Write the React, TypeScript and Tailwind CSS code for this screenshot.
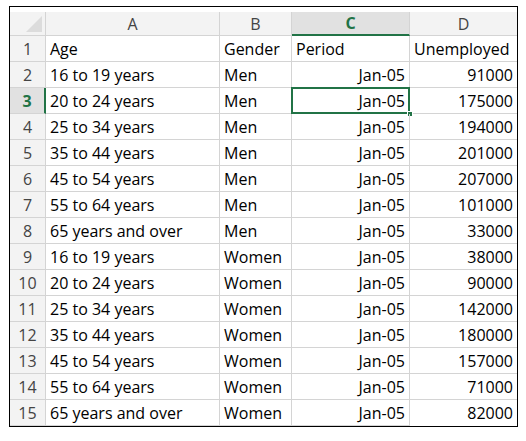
import React from "react";

const rows: [string, string, string, string][] = [
  ["16 to 19 years", "Men", "Jan-05", "91000"],
  ["20 to 24 years", "Men", "Jan-05", "175000"],
  ["25 to 34 years", "Men", "Jan-05", "194000"],
  ["35 to 44 years", "Men", "Jan-05", "201000"],
  ["45 to 54 years", "Men", "Jan-05", "207000"],
  ["55 to 64 years", "Men", "Jan-05", "101000"],
  ["65 years and over", "Men", "Jan-05", "33000"],
  ["16 to 19 years", "Women", "Jan-05", "38000"],
  ["20 to 24 years", "Women", "Jan-05", "90000"],
  ["25 to 34 years", "Women", "Jan-05", "142000"],
  ["35 to 44 years", "Women", "Jan-05", "180000"],
  ["45 to 54 years", "Women", "Jan-05", "157000"],
  ["55 to 64 years", "Women", "Jan-05", "71000"],
  ["65 years and over", "Women", "Jan-05", "82000"],
];

const cell = "h-[26px] border-r border-b border-[#d4d4d4] flex items-center px-[4px] whitespace-nowrap overflow-visible";

export default function App() {
  return (
    <div className="w-[526px] h-[441px] bg-white pt-[6px] pl-[9px]" style={{ fontFamily: "'Open Sans', 'Liberation Sans', sans-serif" }}>
      <div className="w-[509px] h-[421px] border border-black bg-white pt-[5px] text-[16px] text-black">
        <div className="grid grid-cols-[36px_174px_72px_118px_107px]">
          <div className="h-[24px] bg-[#f3f3f3] border-r border-b border-[#d4d4d4] relative">
            <div className="absolute right-[3px] bottom-[3px] w-0 h-0 border-l-[16px] border-l-transparent border-b-[16px] border-b-[#dcdcdc]" />
          </div>
          <div className="h-[24px] bg-[#f3f3f3] border-r border-b border-[#d4d4d4] flex items-center justify-center text-[#444]">A</div>
          <div className="h-[24px] bg-[#f3f3f3] border-r border-b border-[#d4d4d4] flex items-center justify-center text-[#444]">B</div>
          <div className="h-[24px] bg-[#e1e1e1] border-r border-[#d4d4d4] border-b-2 border-b-[#217346] flex items-center justify-center text-[#217346] font-bold">C</div>
          <div className="h-[24px] bg-[#f3f3f3] border-b border-[#d4d4d4] flex items-center justify-center text-[#444]">D</div>
          <div className={`${cell} justify-center bg-[#f3f3f3] text-[#444]`}>1</div>
          <div className={cell}>Age</div>
          <div className={cell}>Gender</div>
          <div className={cell}>Period</div>
          <div className={`${cell} border-r-0`}>Unemployed</div>
          {rows.map((r, i) => {
            const n = i + 2;
            const sel = n === 3;
            return (
              <React.Fragment key={n}>
                <div className={`${cell} justify-center ${sel ? "bg-[#e1e1e1] text-[#217346] font-bold border-r-2 border-r-[#217346]" : "bg-[#f3f3f3] text-[#444]"}`}>{n}</div>
                <div className={cell}>{r[0]}</div>
                <div className={cell}>{r[1]}</div>
                <div className={`${cell} justify-end relative`}>
                  {r[2]}
                  {sel && (
                    <>
                      <div className="absolute -left-px -top-px -right-px -bottom-px border-2 border-[#217346]" />
                      <div className="absolute -right-[4px] -bottom-[4px] w-[6px] h-[6px] bg-[#217346] border border-white" />
                    </>
                  )}
                </div>
                <div className={`${cell} justify-end border-r-0 ${n === 15 ? "border-b-0" : ""}`}>{r[3]}</div>
              </React.Fragment>
            );
          })}
        </div>
      </div>
    </div>
  );
}
